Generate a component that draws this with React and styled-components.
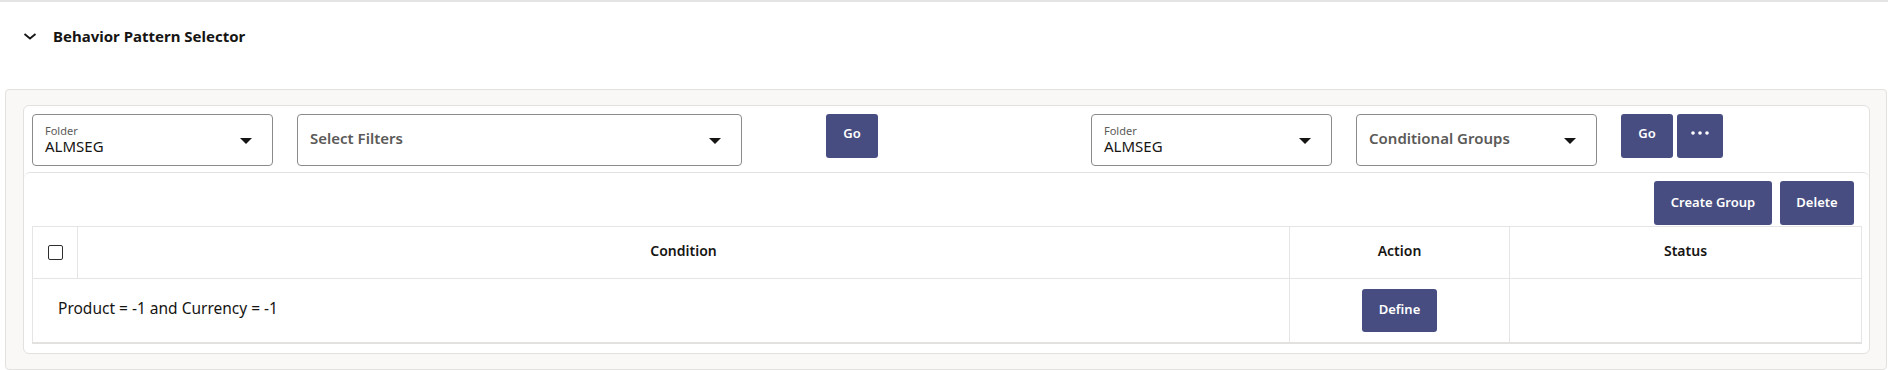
import React from "react";
import styled, { createGlobalStyle } from "styled-components";

const GlobalStyle = createGlobalStyle`
  html, body {
    margin: 0;
    padding: 0;
    background: #ffffff;
    font-family: "Noto Sans", "Liberation Sans", sans-serif;
    color: #161513;
  }
  * { box-sizing: border-box; }
`;

const Page = styled.div`
  width: 1888px;
  height: 370px;
  border-top: 2px solid #e4e4e4;
  padding: 0 1px 0 5px;
  overflow: hidden;
`;

const Header = styled.div`
  display: flex;
  align-items: center;
  height: 87px;
  padding: 0 0 19px 17px;
  gap: 15px;
`;

const Title = styled.h2`
  margin: 0;
  font-size: 15px;
  font-weight: 700;
  color: #161513;
`;

const Panel = styled.div`
  background: #f9f8f6;
  border: 1px solid #e2e1df;
  border-radius: 4px;
  padding: 15px 16px 16px 17px;
  height: 281px;
`;

const Card = styled.div`
  background: #ffffff;
  border: 1px solid #e2e1df;
  border-radius: 6px;
  display: flex;
  flex-direction: column;
`;

const Toolbar = styled.div`
  display: flex;
  align-items: flex-start;
  padding: 8px 8px 6px 8px;
`;

const SelectBox = styled.div`
  position: relative;
  width: ${(p) => p.$w}px;
  height: 52px;
  margin-left: ${(p) => p.$ml || 0}px;
  border: 1px solid #8b8a88;
  border-radius: 4px;
  display: flex;
  flex-direction: column;
  justify-content: center;
  padding: 0 40px 2px 12px;
`;

const SmallLabel = styled.span`
  font-size: 11px;
  line-height: 13px;
  color: #5b5a58;
`;

const Value = styled.span`
  font-size: 15px;
  line-height: 18px;
  color: #161513;
`;

const Placeholder = styled.span`
  font-size: 15px;
  font-weight: 600;
  color: #5b5a58;
  margin-top: -2px;
`;

const Caret = styled.span`
  position: absolute;
  right: 20px;
  top: 23px;
  width: 0;
  height: 0;
  border-left: 6px solid transparent;
  border-right: 6px solid transparent;
  border-top: 6px solid #161513;
`;

const Button = styled.button`
  height: ${(p) => p.$h || 44}px;
  min-width: ${(p) => p.$w || 0}px;
  margin-left: ${(p) => p.$ml || 0}px;
  padding: 0 14px;
  background: #474d80;
  color: #ffffff;
  border: none;
  border-radius: 3px;
  font-family: inherit;
  font-size: 13px;
  font-weight: 600;
  display: inline-flex;
  align-items: center;
  justify-content: center;
  padding-bottom: ${(p) => (p.$raised ? 6 : 2)}px;
`;

const TableSection = styled.div`
  border-top: 1px solid #e2e1df;
  border-radius: 6px 6px 0 0;
  padding: 8px 7px 9px 8px;
  display: flex;
  flex-direction: column;
`;

const ActionRow = styled.div`
  display: flex;
  justify-content: flex-end;
  gap: 8px;
  padding-right: 8px;
  margin-bottom: 1px;
`;

const Table = styled.table`
  width: 100%;
  border-collapse: collapse;
  table-layout: fixed;
  border-bottom: 2px solid #e2e1df;
`;

const Th = styled.th`
  height: 52px;
  border: 1px solid #e6e5e3;
  font-size: 14px;
  font-weight: 600;
  text-align: center;
  color: #161513;
  padding: 0 0 5px 0;
  width: ${(p) => (p.$w ? `${p.$w}px` : "auto")};
`;

const Td = styled.td`
  height: 64px;
  border: 1px solid #e6e5e3;
  border-bottom: none;
  font-size: 15.5px;
  color: #161513;
  text-align: ${(p) => p.$align || "left"};
  padding: 0 0 ${(p) => (p.$align === "center" ? 0 : 5)}px ${(p) => (p.$align === "center" ? 0 : 25)}px;
  vertical-align: middle;
`;

const Checkbox = styled.span`
  display: inline-block;
  width: 15px;
  height: 15px;
  border: 1.5px solid #2f2e2c;
  border-radius: 2px;
  margin-top: 8px;
`;

const Dots = () => (
  <svg width="18" height="4" viewBox="0 0 18 4">
    <circle cx="2" cy="2" r="1.8" fill="#fff" />
    <circle cx="9" cy="2" r="1.8" fill="#fff" />
    <circle cx="16" cy="2" r="1.8" fill="#fff" />
  </svg>
);

const Chevron = () => (
  <svg width="16" height="16" viewBox="0 0 16 16">
    <path d="M2.5 6l5.5 4.5L13.5 6" fill="none" stroke="#161513" strokeWidth="1.8" />
  </svg>
);

function Select({ label, value, placeholder, w, ml }) {
  return (
    <SelectBox $w={w} $ml={ml}>
      {label && <SmallLabel>{label}</SmallLabel>}
      {value && <Value>{value}</Value>}
      {placeholder && <Placeholder>{placeholder}</Placeholder>}
      <Caret />
    </SelectBox>
  );
}

export default function App() {
  return (
    <>
      <GlobalStyle />
      <Page>
        <Header>
          <Chevron />
          <Title>Behavior Pattern Selector</Title>
        </Header>
        <Panel>
          <Card>
            <Toolbar>
              <Select label="Folder" value="ALMSEG" w={241} />
              <Select placeholder="Select Filters" w={445} ml={24} />
              <Button $w={52} $ml={84} $raised>Go</Button>
              <Select label="Folder" value="ALMSEG" w={241} ml={213} />
              <Select placeholder="Conditional Groups" w={241} ml={24} />
              <Button $w={52} $ml={24} $raised>Go</Button>
              <Button $w={44} $ml={4} $raised><Dots /></Button>
            </Toolbar>
            <TableSection>
              <ActionRow>
                <Button $w={118}>Create Group</Button>
                <Button $w={74}>Delete</Button>
              </ActionRow>
              <Table>
                <thead>
                  <tr>
                    <Th $w={45}><Checkbox /></Th>
                    <Th>Condition</Th>
                    <Th $w={220}>Action</Th>
                    <Th $w={352}>Status</Th>
                  </tr>
                </thead>
                <tbody>
                  <tr>
                    <Td colSpan={2}>Product = -1 and Currency = -1</Td>
                    <Td $align="center"><Button $w={75} $h={43}>Define</Button></Td>
                    <Td />
                  </tr>
                </tbody>
              </Table>
            </TableSection>
          </Card>
        </Panel>
      </Page>
    </>
  );
}
